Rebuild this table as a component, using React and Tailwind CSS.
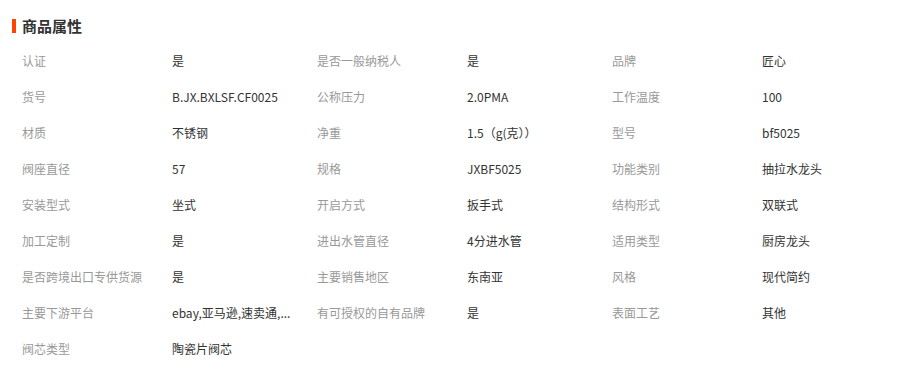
import React from "react";

const rows = [
  ["认证", "是", "是否一般纳税人", "是", "品牌", "匠心"],
  ["货号", "B.JX.BXLSF.CF0025", "公称压力", "2.0PMA", "工作温度", "100"],
  ["材质", "不锈钢", "净重", "1.5（g(克））", "型号", "bf5025"],
  ["阀座直径", "57", "规格", "JXBF5025", "功能类别", "抽拉水龙头"],
  ["安装型式", "坐式", "开启方式", "扳手式", "结构形式", "双联式"],
  ["加工定制", "是", "进出水管直径", "4分进水管", "适用类型", "厨房龙头"],
  ["是否跨境出口专供货源", "是", "主要销售地区", "东南亚", "风格", "现代简约"],
  ["主要下游平台", "ebay,亚马逊,速卖通,...", "有可授权的自有品牌", "是", "表面工艺", "其他"],
  ["阀芯类型", "陶瓷片阀芯"],
];

export default function App() {
  return (
    <div
      className="w-[902px] h-[371px] bg-white overflow-hidden"
      style={{ fontFamily: '"Noto Sans CJK SC", "Microsoft YaHei", sans-serif' }}
    >
      <div className="flex items-center h-[14px] mt-[19px] pl-[12px]">
        <div className="w-[4px] h-[14px] bg-[#ff4400]" />
        <div className="ml-[6px] text-[15px] leading-[14px] font-bold text-[#333]">商品属性</div>
      </div>
      <div className="mt-[10px] ml-[12px] w-[886px]">
        {rows.map((r, i) => (
          <div key={i} className="grid grid-cols-[150px_145px_150px_145px_150px_1fr] h-[36px] items-center text-[12px] leading-[16px]">
            {r.map((c, j) => (
              <div
                key={j}
                className={
                  "pl-[10px] whitespace-nowrap " + (j % 2 === 0 ? "text-[#999]" : "text-[#333]")
                }
              >
                {c}
              </div>
            ))}
          </div>
        ))}
      </div>
    </div>
  );
}
